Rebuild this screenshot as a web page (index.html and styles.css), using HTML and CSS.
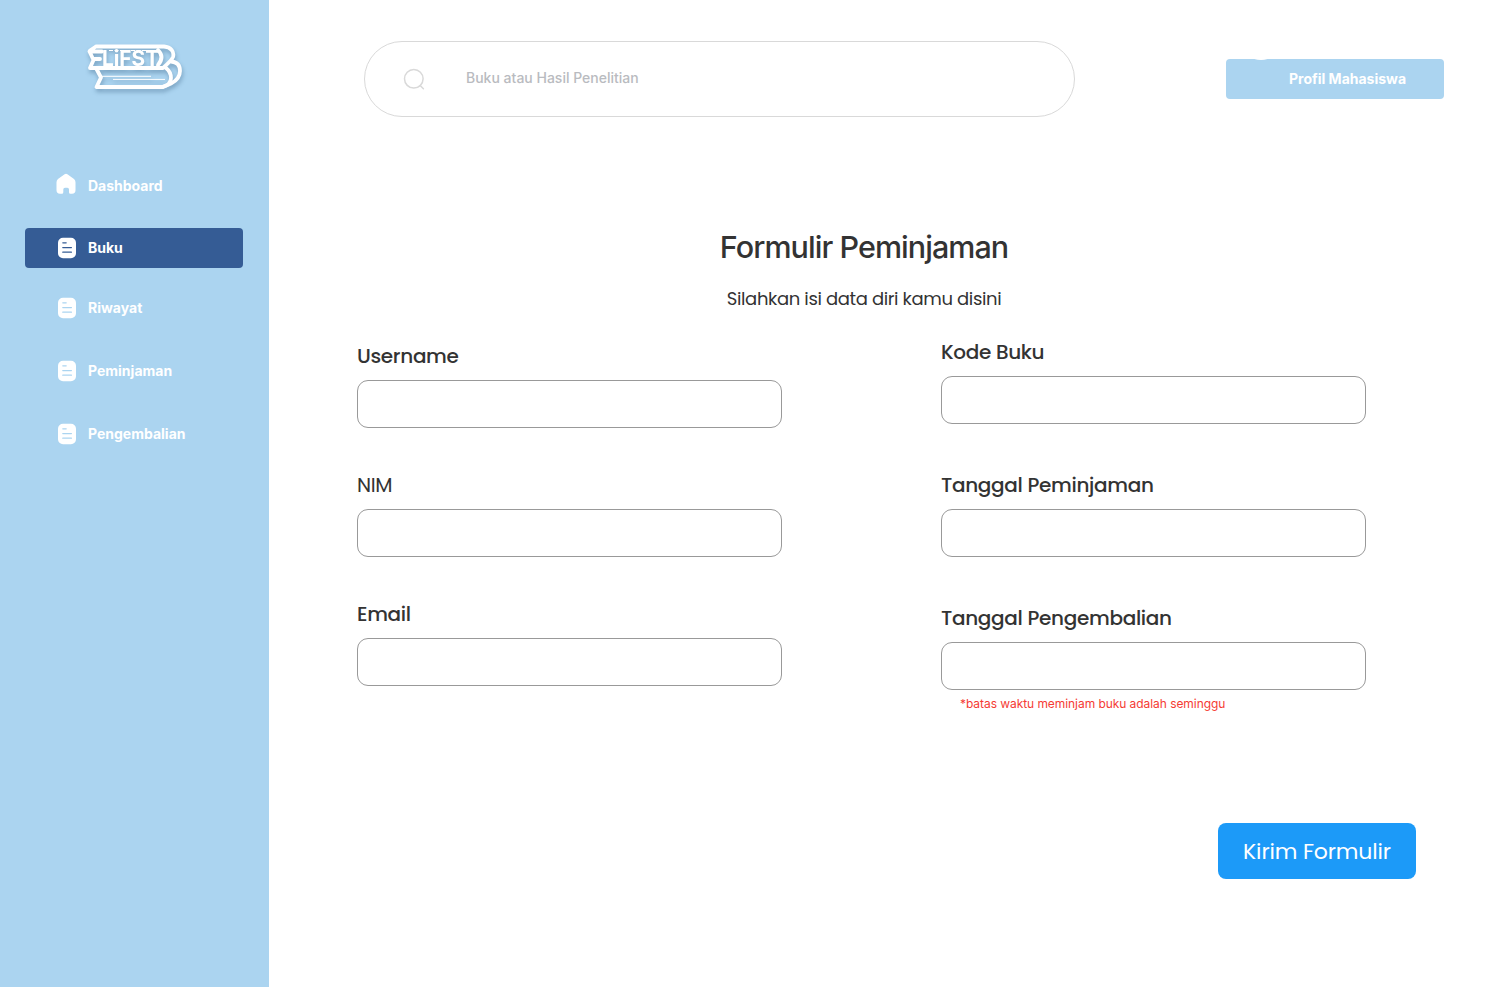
FILE: index.html
```html
<!DOCTYPE html>
<html lang="id">
<head>
<meta charset="utf-8">
<title>Formulir Peminjaman</title>
<link rel="stylesheet" href="styles.css">
</head>
<body>
<svg width="0" height="0" class="defs">
  <symbol id="doc" viewBox="0 0 20 22">
    <path fill="currentColor" fill-rule="evenodd" d="M6 .8h8a5 5 0 0 1 5 5v10.400a5 5 0 0 1-5 5H6a5 5 0 0 1-5-5V5.800a5 5 0 0 1 5-5ZM5.800 5.200a.6.6 0 0 0 0 1.200h3.400a.6.6 0 0 0 0-1.200ZM5.800 9.900a.65.65 0 0 0 0 1.300h8.600a.65.65 0 0 0 0-1.300ZM5.800 14.500a.65.65 0 0 0 0 1.300h8.600a.65.65 0 0 0 0-1.300Z"/>
  </symbol>
</svg>
<div class="app">
  <aside class="sidebar">
    <svg class="logo" viewBox="0 0 120 70" width="120" height="70">
      <g fill="none" stroke="#fff" stroke-width="3.800" stroke-linejoin="round" stroke-linecap="round">
        <path d="M20 12.500H88C95 13 98.500 18 97 23Q96 26 87 34H14L17.500 26 13.500 17.500H26M20 12.500 14 16.500M18 25H24"/>
        <path d="M82 16Q89 23 82 31"/>
        <path d="M20 34 25 43.500 20.500 53H86Q95 51 95 44Q95 38 90 34"/>
        <path d="M95 27.500Q104 28 104 37Q104 45 95 49.500L87 53"/>
      </g>
      <path d="M26 42.300H75M37 45.400H89" stroke="#fff" stroke-width="1" fill="none"/>
      <path d="M33 16.500H80" stroke="#fff" stroke-width="1" stroke-dasharray="4 1.500"/>
      <text x="26" y="31.800" class="logo-text" textLength="57" lengthAdjust="spacingAndGlyphs">LiFST</text>
    </svg>
    <nav class="nav">
      <a class="item home"><svg width="20" height="22" viewBox="0 0 20 22"><path fill="currentColor" d="M8.600 1.200Q10 .4 11.400 1.200L18 6Q19.500 7.300 19.500 9.200V17Q19.500 20.800 16 20.800H14.400Q13 20.800 13 19.200V16.500Q13 14.800 11.400 14.800H9Q7.300 14.800 7.300 16.500V19.200Q7.300 20.800 5.800 20.800H4Q.5 20.800 .5 17V9.200Q.5 7.300 2 6Z"/></svg><span>Dashboard</span></a>
      <a class="item active"><svg width="20" height="22"><use href="#doc"/></svg><span>Buku</span></a>
      <a class="item"><svg width="20" height="22"><use href="#doc"/></svg><span>Riwayat</span></a>
      <a class="item"><svg width="20" height="22"><use href="#doc"/></svg><span>Peminjaman</span></a>
      <a class="item"><svg width="20" height="22"><use href="#doc"/></svg><span>Pengembalian</span></a>
    </nav>
  </aside>
  <main class="main">
    <header class="topbar">
      <div class="search">
        <svg width="24" height="24" viewBox="0 0 24 24" fill="none" stroke="#d9d9d9" stroke-width="1.500" stroke-linecap="round"><circle cx="10.800" cy="11.800" r="9.300"/><path d="m17.400 18.800 3 3"/></svg>
        <span>Buku atau Hasil Penelitian</span>
      </div>
      <div class="profile"><i class="avatar"></i><span>Profil Mahasiswa</span></div>
    </header>
    <div class="heading">
      <h1>Formulir Peminjaman</h1>
      <p>Silahkan isi data diri kamu disini</p>
    </div>
    <form class="form">
      <div class="column">
        <label class="field"><span>Username</span><input></label>
        <label class="field"><span class="regular">NIM</span><input></label>
        <label class="field"><span>Email</span><input></label>
      </div>
      <div class="column right">
        <label class="field"><span>Kode Buku</span><input></label>
        <label class="field"><span>Tanggal Peminjaman</span><input></label>
        <label class="field"><span>Tanggal Pengembalian</span><input></label>
        <small>*batas waktu meminjam buku adalah seminggu</small>
      </div>
    </form>
    <button class="submit" type="button">Kirim Formulir</button>
  </main>
</div>
</body>
</html>
```
FILE: styles.css
```css
* { box-sizing: border-box; }
body { margin: 0; background: #fff; color: #333; font-family: Inter, sans-serif; }
.defs { position: absolute; }
.app { display: flex; height: 987px; overflow: hidden; }
.sidebar { width: 269px; flex: none; background: #abd4f0; color: #fff; padding: 34px 25px 0; }
.logo { display: block; margin-left: 51px; filter: drop-shadow(1px 3px 2px rgba(50, 90, 125, .4)); }
.logo-text { font: 700 22px Inter, sans-serif; fill: #fff; }
.nav { display: flex; flex-direction: column; gap: 23px; padding-top: 62px; }
.item { display: flex; align-items: center; gap: 11px; width: 218px; height: 40px; padding-left: 32px; border-radius: 4px; font-size: 14px; font-weight: 700; }
.item span, .profile span { padding-bottom: 2px; }
.item.home { margin-bottom: -1px; }
.item.home svg { margin: -4px .7px 0 -.7px; }
.item.active { background: #355c95; margin-bottom: -3px; }
.main { flex: 1; display: flex; flex-direction: column; }
.topbar { display: flex; justify-content: space-between; align-items: center; padding: 41px 68px 0 95px; }
.search { display: flex; align-items: center; width: 711px; height: 76px; border: 1px solid #d9d9d9; border-radius: 38px; padding-left: 38px; color: #b9bbc0; font-size: 14px; font-weight: 500; }
.search span { margin-left: 39px; padding-bottom: 3px; }
.profile { display: flex; align-items: center; position: relative; width: 218px; height: 40px; border-radius: 4px; padding-left: 63px; background: #abd4f0; color: #fff; font-size: 14px; font-weight: 700; overflow: hidden; }
.avatar { position: absolute; left: 13px; top: -43px; width: 44px; height: 44px; border-radius: 50%; background: #fff; }
.heading { width: 400px; margin: 110px 0 0 395px; text-align: center; }
h1 { margin: 0; font-size: 30.5px; font-weight: 500; line-height: 40px; letter-spacing: -.95px; white-space: nowrap; }
p { margin: 17px 0 0; font-family: Poppins, Inter, sans-serif; font-size: 18px; line-height: 30px; letter-spacing: -.37px; white-space: nowrap; }
.form { display: flex; gap: 159px; height: 385px; padding: 27px 0 0 88px; }
.column { display: flex; flex-direction: column; gap: 42px; width: 425px; }
.column.right { gap: 46px; margin-top: -4px; }
.field { display: block; font-family: Poppins, Inter, sans-serif; font-size: 20px; font-weight: 500; line-height: 30px; letter-spacing: -.32px; white-space: nowrap; }
.field span { display: block; height: 30px; }
.field input { display: block; width: 425px; height: 48px; margin: 9px 0 0; border: 1px solid #999; border-radius: 11px; background: #fff; padding: 0 16px; font: 16px Inter, sans-serif; }
.field .regular { font-weight: 400; }
small { margin: -40px 0 0 19px; color: #f53b34; font-size: 12px; line-height: 16px; letter-spacing: -.06px; white-space: nowrap; }
.submit { align-self: flex-start; width: 198px; height: 56px; margin: 124px 0 0 949px; padding: 1px 0 0; border: 0; border-radius: 8px; background: #1c9af8; color: #fff; font: 400 22px/55px Poppins, Inter, sans-serif; letter-spacing: -.15px; }
```
